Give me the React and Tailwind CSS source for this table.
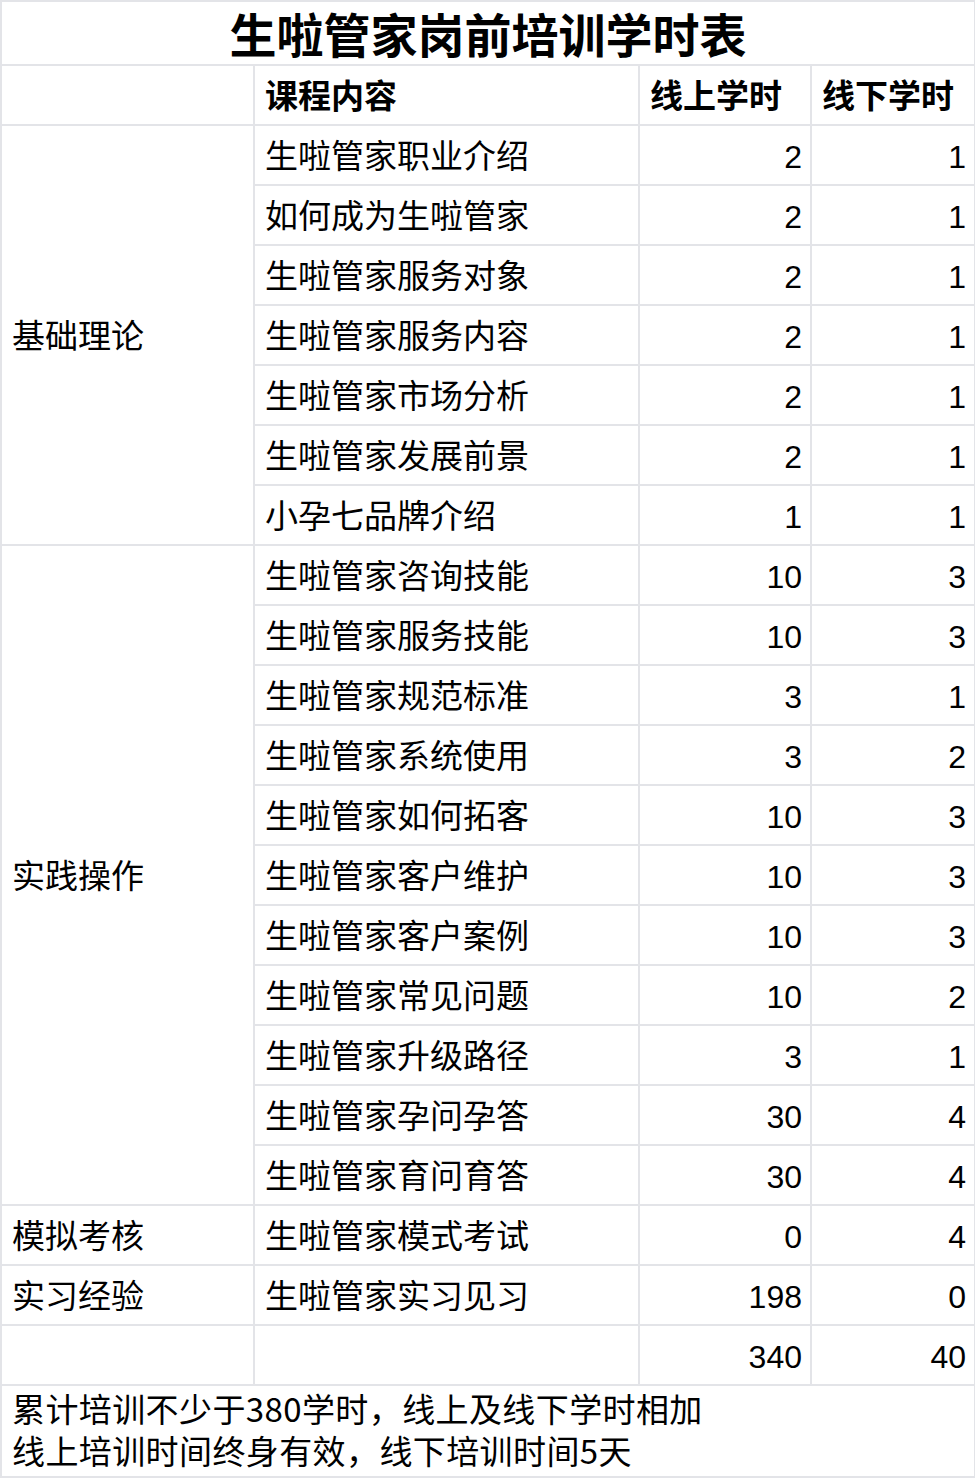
const font = { fontFamily: '"Noto Sans CJK SC", "Liberation Sans", sans-serif' }

const groups = [
  {
    name: '基础理论',
    rows: [
      ['生啦管家职业介绍', 2, 1],
      ['如何成为生啦管家', 2, 1],
      ['生啦管家服务对象', 2, 1],
      ['生啦管家服务内容', 2, 1],
      ['生啦管家市场分析', 2, 1],
      ['生啦管家发展前景', 2, 1],
      ['小孕七品牌介绍', 1, 1]
    ]
  },
  {
    name: '实践操作',
    rows: [
      ['生啦管家咨询技能', 10, 3],
      ['生啦管家服务技能', 10, 3],
      ['生啦管家规范标准', 3, 1],
      ['生啦管家系统使用', 3, 2],
      ['生啦管家如何拓客', 10, 3],
      ['生啦管家客户维护', 10, 3],
      ['生啦管家客户案例', 10, 3],
      ['生啦管家常见问题', 10, 2],
      ['生啦管家升级路径', 3, 1],
      ['生啦管家孕问孕答', 30, 4],
      ['生啦管家育问育答', 30, 4]
    ]
  },
  { name: '模拟考核', rows: [['生啦管家模式考试', 0, 4]] },
  { name: '实习经验', rows: [['生啦管家实习见习', 198, 0]] }
]

const cell = 'border-2 border-[#e3e4e8] h-[60px] p-0'
const num = 'font-["Liberation_Sans",sans-serif] text-[32px] text-right pr-[8px] pt-[3px]'

const App = () => {
  return (
    <div className="w-[975px] bg-white text-black" style={font}>
      <table className="w-[974px] border-collapse table-fixed">
        <colgroup>
          <col className="w-[253px]" />
          <col className="w-[385px]" />
          <col className="w-[172px]" />
          <col className="w-[164px]" />
        </colgroup>
        <tbody>
          <tr>
            <td
              colSpan={4}
              className="border-2 border-[#e3e4e8] h-[64px] text-center text-[47px] font-bold leading-none pb-[2px]"
            >
              生啦管家岗前培训学时表
            </td>
          </tr>
          <tr className="text-[33px] font-bold">
            <td className={cell}></td>
            <td className={`${cell} pl-[10px]`}>课程内容</td>
            <td className={`${cell} pl-[10px]`}>线上学时</td>
            <td className={`${cell} pl-[10px]`}>线下学时</td>
          </tr>
          {groups.map(g =>
            g.rows.map((r, i) => (
              <tr key={r[0]} className="text-[33px]">
                {i === 0 && (
                  <td rowSpan={g.rows.length} className={`${cell} pl-[10px]`}>
                    {g.name}
                  </td>
                )}
                <td className={`${cell} pl-[10px]`}>{r[0]}</td>
                <td className={`${cell} ${num}`}>{r[1]}</td>
                <td className={`${cell} ${num}`}>{r[2]}</td>
              </tr>
            ))
          )}
          <tr className="text-[33px]">
            <td className={cell}></td>
            <td className={cell}></td>
            <td className={`${cell} ${num}`}>340</td>
            <td className={`${cell} ${num}`}>40</td>
          </tr>
          <tr>
            <td
              colSpan={4}
              className="border-2 border-[#e3e4e8] h-[92px] pl-[10px] pt-[1px] text-[33px] leading-[42px] tracking-[0.4px] align-top"
            >
              <div>累计培训不少于380学时，线上及线下学时相加</div>
              <div>线上培训时间终身有效，线下培训时间5天</div>
            </td>
          </tr>
        </tbody>
      </table>
    </div>
  )
}

export default App
